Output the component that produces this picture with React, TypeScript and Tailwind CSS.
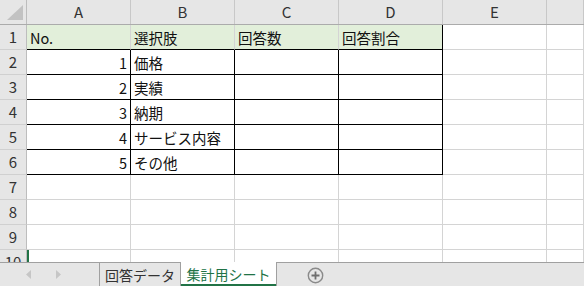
import React from "react";

const FONT = { fontFamily: '"Noto Sans CJK JP", "Noto Sans", sans-serif' };

const colLetters = ["A", "B", "C", "D", "E", "F"];
const widthCls = ["w-[104px]", "w-[104px]", "w-[104px]", "w-[104px]", "w-[104px]", "flex-1"];

type Cell = { text?: string; right?: boolean; green?: boolean; bR?: boolean; bB?: boolean; selL?: boolean };

const data: Cell[][] = [
  [
    { text: "No.", green: true, bB: true },
    { text: "選択肢", green: true, bB: true },
    { text: "回答数", green: true, bB: true },
    { text: "回答割合", green: true, bB: true, bR: true },
  ],
  ...[
    ["1", "価格"],
    ["2", "実績"],
    ["3", "納期"],
    ["4", "サービス内容"],
    ["5", "その他"],
  ].map(([n, t]) => [
    { text: n, right: true, bR: true, bB: true },
    { text: t, bR: true, bB: true },
    { bR: true, bB: true },
    { bR: true, bB: true },
  ]),
  [],
  [],
  [],
  [{ selL: true }],
];

function GridCell({ c, i }: { c?: Cell; i: number }) {
  const cell = c || {};
  return (
    <div
      className={[
        widthCls[i],
        "h-full shrink-0 flex items-center overflow-hidden whitespace-nowrap text-[14.5px] text-[#111] leading-none pt-[2px]",
        cell.green ? "bg-[#e2efda]" : "bg-white",
        cell.bR ? "border-r border-r-black" : "border-r border-r-[#d4d4d4]",
        cell.bB ? "border-b border-b-black" : "border-b border-b-[#d4d4d4]",
        cell.right ? "justify-end pr-[3px]" : "justify-start pl-[3px]",
        cell.selL ? "shadow-[inset_2px_0_0_#217346]" : "",
      ].join(" ")}
    >
      {cell.text}
    </div>
  );
}

export default function App() {
  return (
    <div className="w-[584px] h-[286px] flex flex-col overflow-hidden bg-white" style={FONT}>
      <div className="flex-1 overflow-hidden flex flex-col">
        {/* column header */}
        <div className="flex h-[25px] shrink-0 bg-[#e6e6e6] border-b border-b-[#ababab]">
          <div className="w-[27px] shrink-0 h-full border-r border-r-[#bdbdbd] flex items-end justify-end pr-[2px] pb-[3px]">
            <svg width="17" height="16" viewBox="0 0 17 16">
              <polygon points="0,15 16,0 16,15" fill="#c2c2c2" />
            </svg>
          </div>
          {colLetters.map((l, i) => (
            <div
              key={l}
              className={`${widthCls[i]} shrink-0 h-full border-r border-r-[#c8c8c8] flex items-center justify-center text-[15px] text-[#333] pt-[1px]`}
            >
              {i < 5 ? l : ""}
            </div>
          ))}
        </div>
        {/* rows */}
        {data.map((row, r) => (
          <div key={r} className="flex h-[25px] shrink-0">
            <div className="w-[27px] shrink-0 h-full bg-[#e6e6e6] border-r border-r-[#bdbdbd] border-b border-b-[#d0d0d0] flex items-center justify-center text-[15px] text-[#333] pt-[1px]">
              {r + 1}
            </div>
            {colLetters.map((_, i) => (
              <GridCell key={i} c={row[i]} i={i} />
            ))}
          </div>
        ))}
      </div>
      {/* sheet tabs */}
      <div className="h-[24px] shrink-0 flex bg-[#e6e6e6] text-[14px] leading-none">
        <div className="w-[99px] shrink-0 border-t border-t-[#a0a0a0] flex items-center">
          <svg width="6" height="9" viewBox="0 0 6 9" className="ml-[26px]">
            <polygon points="5,0 0,4.5 5,9" fill="#c6c6c6" />
          </svg>
          <svg width="6" height="9" viewBox="0 0 6 9" className="ml-[23px]">
            <polygon points="1,0 6,4.5 1,9" fill="#c6c6c6" />
          </svg>
        </div>
        <div className="w-[82px] shrink-0 border-t border-t-[#a0a0a0] border-l border-l-[#a0a0a0] border-r border-r-[#a0a0a0] flex items-center justify-center text-[#333] pt-[1px]">
          回答データ
        </div>
        <div className="w-[95px] shrink-0 bg-white border-b-2 border-b-[#217346] flex items-center justify-center text-[#217346] pt-[2px]">
          集計用シート
        </div>
        <div className="flex-1 border-t border-t-[#a0a0a0] border-l border-l-[#a0a0a0] flex items-center">
          <svg width="17" height="17" viewBox="0 0 17 17" className="ml-[30px] mt-[2px]">
            <circle cx="8.5" cy="8.5" r="7.2" fill="none" stroke="#8a8a8a" strokeWidth="1.4" />
            <path d="M8.5 4.5V12.5M4.5 8.5H12.5" stroke="#6e6e6e" strokeWidth="1.8" />
          </svg>
        </div>
      </div>
    </div>
  );
}
